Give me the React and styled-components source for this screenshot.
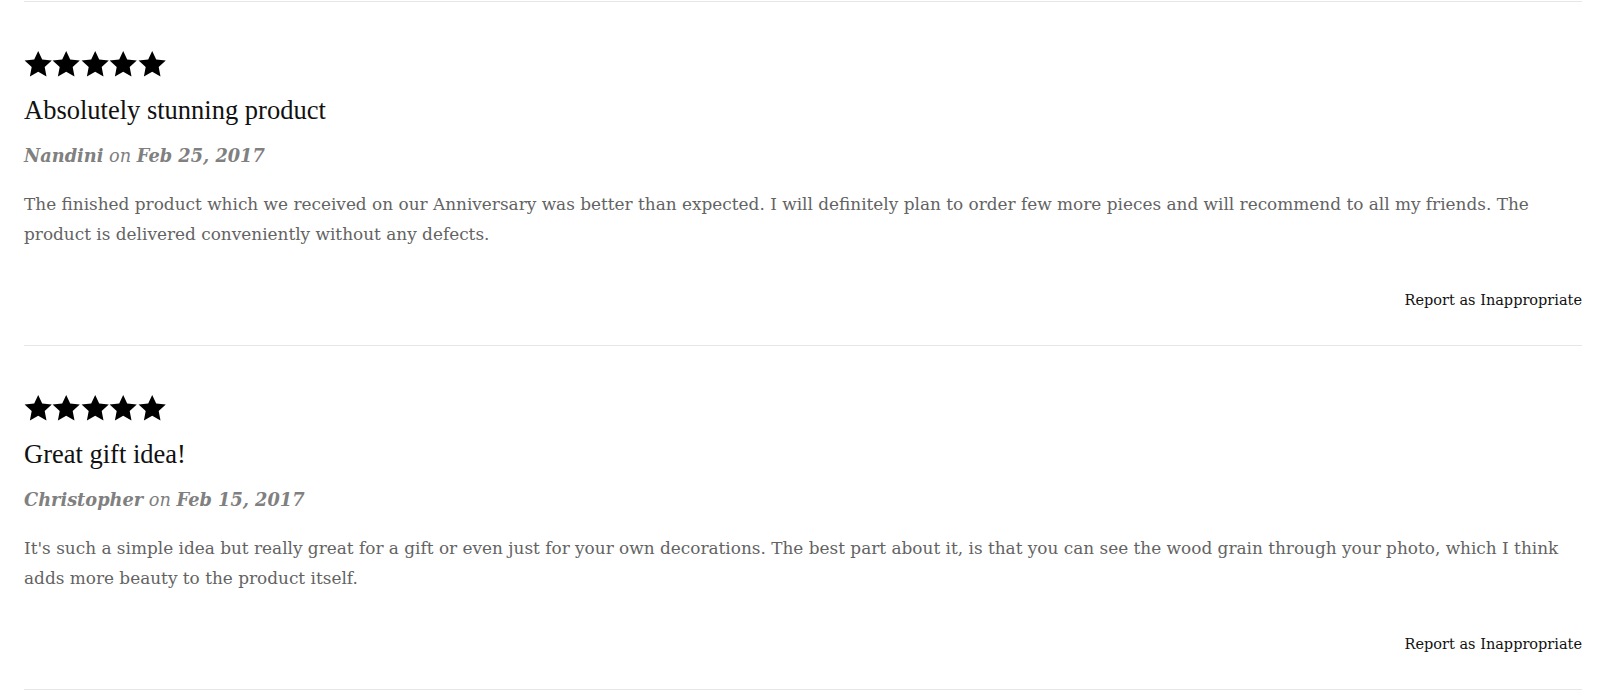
import React from "react";
import styled, { createGlobalStyle } from "styled-components";

const GlobalStyle = createGlobalStyle`
  html, body { margin: 0; padding: 0; background: #fff; }
  body { font-family: "DejaVu Serif", Georgia, serif; }
`;

const Page = styled.div`
  padding: 1px 18px 0 24px;
`;

const Review = styled.article`
  border-top: 1px solid #e6e6e6;
  padding: 48px 0 35px;
  display: flex;
  flex-direction: column;
  &:last-child { border-bottom: 1px solid #e6e6e6; }
`;

const Stars = styled.div`
  display: flex;
  height: 28px;
`;

const Star = styled.svg`
  width: 28.4px;
  height: 28px;
  display: block;
`;

const Title = styled.h3`
  margin: 16px 0 0;
  font-family: "Liberation Serif", serif;
  font-weight: 400;
  font-size: 26.5px;
  line-height: 32px;
  color: #111;
`;

const Meta = styled.div`
  margin-top: 18px;
  font-family: "DejaVu Serif", serif;
  font-style: italic;
  font-size: 17.75px;
  line-height: 24px;
  color: #808080;
`;

const Strong = styled.b`
  font-weight: 700;
`;

const Body = styled.p`
  margin: 21px 0 0;
  font-family: "DejaVu Serif", serif;
  font-size: 16.9px;
  line-height: 30px;
  color: #636363;
`;

const Actions = styled.div`
  display: flex;
  justify-content: flex-end;
  margin-top: 41px;
`;

const ReportLink = styled.a`
  font-family: "DejaVu Serif", serif;
  font-size: 14.5px;
  line-height: 20px;
  color: #111;
  text-decoration: none;
  cursor: pointer;
`;

const StarIcon = () => (
  <Star viewBox="0 0 28 28">
    <path
      d="M14 1 L18 9.5 L27.6 10.6 L20.5 17.1 L22.3 26.4 L14 21.8 L5.7 26.4 L7.5 17.1 L0.4 10.6 L10 9.5 Z"
      fill="#000"
    />
  </Star>
);

const reviews = [
  {
    title: "Absolutely stunning product",
    author: "Nandini",
    date: "Feb 25, 2017",
    text:
      "The finished product which we received on our Anniversary was better than expected. I will definitely plan to order few more pieces and will recommend to all my friends. The product is delivered conveniently without any defects.",
  },
  {
    title: "Great gift idea!",
    author: "Christopher",
    date: "Feb 15, 2017",
    text:
      "It's such a simple idea but really great for a gift or even just for your own decorations. The best part about it, is that you can see the wood grain through your photo, which I think adds more beauty to the product itself.",
  },
];

export default function App() {
  return (
    <Page>
      <GlobalStyle />
      {reviews.map((r) => (
        <Review key={r.title}>
          <Stars>
            {[0, 1, 2, 3, 4].map((i) => (
              <StarIcon key={i} />
            ))}
          </Stars>
          <Title>{r.title}</Title>
          <Meta>
            <Strong>{r.author}</Strong> on <Strong>{r.date}</Strong>
          </Meta>
          <Body>{r.text}</Body>
          <Actions>
            <ReportLink>Report as Inappropriate</ReportLink>
          </Actions>
        </Review>
      ))}
    </Page>
  );
}
